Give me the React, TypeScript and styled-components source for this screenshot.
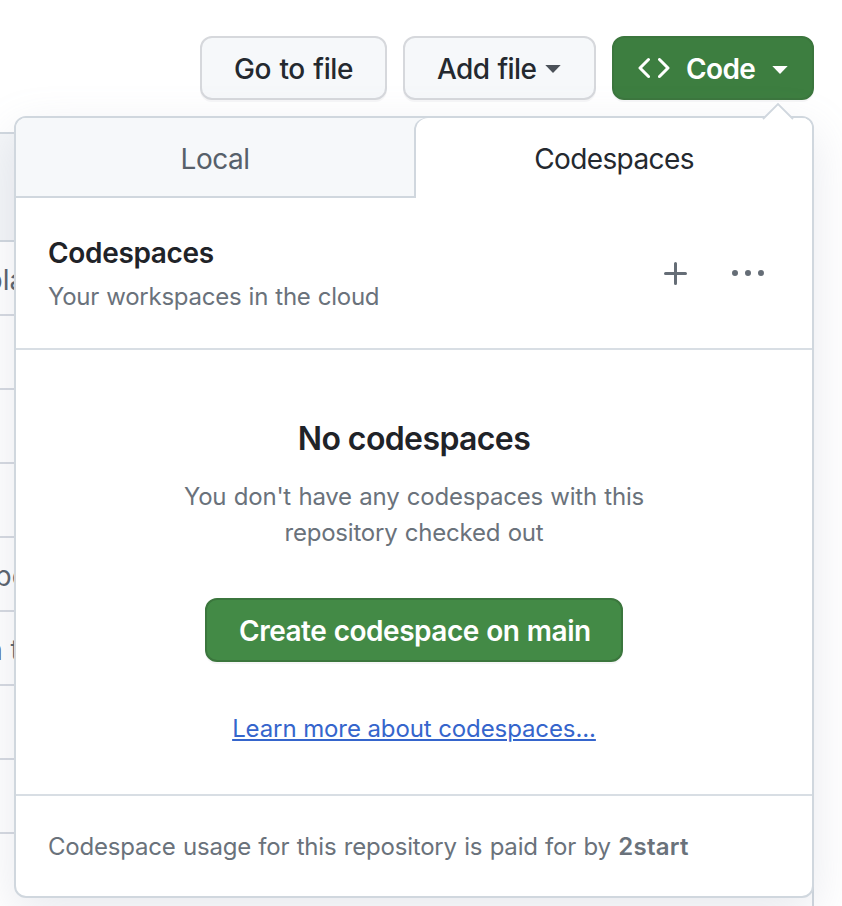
import React from "react";
import styled, { createGlobalStyle } from "styled-components";

const Global = createGlobalStyle`
  * { box-sizing: border-box; }
  body { margin: 0; background: #fff; }
  h2, h3, p { margin: 0; }
  button { font: inherit; }
`;

const Page = styled.main`
  position: relative;
  width: 842px;
  height: 906px;
  overflow: hidden;
  background: #fff;
  color: #1f2328;
  font-family: Inter, "Liberation Sans", sans-serif;
  -webkit-font-smoothing: antialiased;
`;

const Toolbar = styled.header`
  display: flex;
  justify-content: flex-end;
  gap: 16px;
  height: 132px;
  padding: 36px 28px 0 0;
`;

const Button = styled.button<{ $primary?: boolean; $width: number; $background?: string }>`
  display: flex;
  align-items: center;
  width: ${(p) => p.$width}px;
  height: 64px;
  padding: 1px 0 0 32px;
  border: 2px solid ${(p) => (p.$primary ? "#3b763d" : "#d6d8dc")};
  border-radius: 12px;
  background: ${(p) => p.$background ?? "#f6f8fa"};
  color: ${(p) => (p.$primary ? "#fff" : "#24292f")};
  box-shadow: 0 2px 0 rgba(31, 35, 40, 0.04);
  white-space: nowrap;
`;

const ButtonText = styled.span<{ $spacing: number; $word?: number; $weight?: number }>`
  font-size: 28px;
  line-height: 40px;
  font-weight: ${(p) => p.$weight ?? 600};
  letter-spacing: ${(p) => p.$spacing}px;
  word-spacing: ${(p) => p.$word ?? 0}px;
`;

const Caret = styled.svg<{ $gap: number; $drop?: number; $color?: string }>`
  flex: none;
  width: 16px;
  height: 8px;
  margin: ${(p) => p.$drop ?? 0}px 0 0 ${(p) => p.$gap}px;
  fill: ${(p) => p.$color ?? "currentColor"};
`;

const CodeIcon = styled.svg`
  flex: none;
  width: 32px;
  height: 32px;
  margin: -1px 16px 0 -8px;
  fill: currentColor;
`;

const FileTable = styled.section`
  width: 842px;
  padding-right: 28px;
`;

const TableHead = styled.div`
  height: 110px;
  border: solid #d0d7de;
  border-width: 2px 2px 2px 0;
  border-radius: 0 12px 0 0;
  background: #f4f6f8;
`;

const TableRow = styled.div`
  height: 74px;
  overflow: hidden;
  border: solid #d5d9e0;
  border-width: 0 2px 2px 0;
  color: #57606a;
  font-size: 28px;
  line-height: 72px;
`;

const RowText = styled.span<{ $shift: number }>`
  display: block;
  margin-left: ${(p) => p.$shift}px;
  padding-top: 2px;
  white-space: pre;
`;

const ReadmeBox = styled.section`
  width: 814px;
  height: 72px;
  border-right: 2px solid #d0d7de;
`;

const Popover = styled.section`
  position: absolute;
  top: 116px;
  left: 14px;
  display: flex;
  flex-direction: column;
  width: 800px;
  height: 782px;
  border: 2px solid #d0d7de;
  border-radius: 12px;
  background: #fff;
  box-shadow: 0 16px 48px rgba(140, 147, 172, 0.2);
`;

const Pointer = styled.svg`
  position: absolute;
  top: -16px;
  right: 18px;
  width: 32px;
  height: 18px;
`;

const Tabs = styled.nav`
  display: flex;
  flex: none;
  height: 80px;
  border-radius: 10px 10px 0 0;
  background: linear-gradient(90deg, #f6f8fa 60%, #fff 60%);
`;

const Tab = styled.button<{ $active?: boolean }>`
  flex: 0 0 ${(p) => (p.$active ? 396 : 400)}px;
  padding: ${(p) => (p.$active ? "1px 0 0" : "4px 2px 0 0")};
  border: 0 solid #d0d7de;
  border-width: ${(p) => (p.$active ? "0" : "0 0 2px")};
  border-radius: ${(p) => (p.$active ? "12px 10px 0 0" : "10px 0 0 0")};
  background: ${(p) => (p.$active ? "#fff" : "#f6f8fa")};
  box-shadow: ${(p) => (p.$active ? "-2px 0 0 #d0d7de" : "none")};
  color: ${(p) => (p.$active ? "#24292f" : "#57606a")};
  font-size: 28px;
  line-height: 36px;
  letter-spacing: ${(p) => (p.$active ? -0.6 : -0.5)}px;
`;

const Intro = styled.header`
  display: flex;
  align-items: center;
  justify-content: space-between;
  flex: none;
  height: 152px;
  padding: 2px 48px 0 32px;
  border-bottom: 2px solid #d8dee4;
`;

const IntroText = styled.div`
  display: flex;
  flex-direction: column;
  gap: 6px;
`;

const IntroTitle = styled.h3`
  font-size: 28px;
  line-height: 40px;
  font-weight: 600;
  letter-spacing: -0.33px;
`;

const Muted = styled.p<{ $spacing: number; $word: number }>`
  color: #6a727b;
  font-size: 24px;
  line-height: 36px;
  letter-spacing: ${(p) => p.$spacing}px;
  word-spacing: ${(p) => p.$word}px;
  white-space: nowrap;
`;

const Actions = styled.div`
  display: flex;
  gap: 40px;
  color: #656d76;
`;

const ActionIcon = styled.svg`
  display: block;
  width: 32px;
  height: 32px;
  fill: currentColor;
`;

const Blank = styled.div`
  display: flex;
  flex-direction: column;
  align-items: center;
  flex: none;
  height: 446px;
  padding-top: 65px;
  border-bottom: 2px solid #d8dee4;
  text-align: center;
`;

const BlankTitle = styled.h2`
  margin-bottom: 16px;
  font-size: 32px;
  line-height: 48px;
  font-weight: 600;
  letter-spacing: -0.61px;
`;

const CreateSlot = styled.div`
  margin: 47px 0 49px;
`;

const Link = styled.a`
  color: #3565cc;
  font-size: 24px;
  line-height: 36px;
  text-decoration: underline;
  text-decoration-thickness: 2px;
  text-underline-offset: 2px;
  text-decoration-skip-ink: auto;
  letter-spacing: -0.1px;
`;

const Footer = styled.footer`
  display: flex;
  align-items: center;
  flex: 1;
  padding: 2px 0 0 32px;
`;

const Payer = styled.strong`
  font-weight: 600;
  letter-spacing: 0.3px;
`;

const rows = [
  { text: "pla", shift: -14.5 },
  { text: "", shift: 0 },
  { text: "", shift: 0 },
  { text: "", shift: 0 },
  { text: "pe", shift: -5.5 },
  { text: "n t", shift: -13.8 },
  { text: "", shift: 0 },
  { text: "", shift: 0 },
];

function DropCaret({ gap, drop, color }: { gap: number; drop?: number; color?: string }) {
  return (
    <Caret $gap={gap} $drop={drop} $color={color} viewBox="0 0 16 8" aria-hidden="true">
      <path d="M0.3 0H15.7L8 8Z" />
    </Caret>
  );
}

export default function App() {
  return (
    <Page>
      <Global />
      <Toolbar>
        <Button $width={187}>
          <ButtonText $spacing={-0.43} $word={1.5} $weight={550}>Go to file</ButtonText>
        </Button>
        <Button $width={193}>
          <ButtonText $spacing={-0.6} $word={1.2} $weight={550}>Add file</ButtonText>
          <DropCaret gap={9} color="#4b5158" />
        </Button>
        <Button $primary $width={202} $background="#3d7e40">
          <CodeIcon viewBox="0 0 16 16" aria-hidden="true">
            <path d="m11.28 3.22 4.25 4.25a.75.75 0 0 1 0 1.06l-4.25 4.25a.749.749 0 0 1-1.275-.326.749.749 0 0 1 .215-.734L13.94 8l-3.72-3.72a.749.749 0 0 1 .326-1.275.749.749 0 0 1 .734.215Zm-6.56 0a.751.751 0 0 1 1.042.018.751.751 0 0 1 .018 1.042L2.06 8l3.72 3.72a.749.749 0 0 1-.326 1.275.749.749 0 0 1-.734-.215L.47 8.53a.75.75 0 0 1 0-1.06Z" />
          </CodeIcon>
          <ButtonText $spacing={-0.6}>Code</ButtonText>
          <DropCaret gap={17} drop={2} />
        </Button>
      </Toolbar>

      <FileTable>
        <TableHead />
        {rows.map((row, index) => (
          <TableRow key={index}>
            <RowText $shift={row.shift}>{row.text}</RowText>
          </TableRow>
        ))}
      </FileTable>
      <ReadmeBox />

      <Popover>
        <Pointer viewBox="0 0 32 18" aria-hidden="true">
          <path d="M1 18V17L2 16L16 2L30 16L31 17V18Z" fill="#fff" />
          <path d="M1 17L16 2L31 17" fill="none" stroke="#d0d7de" strokeWidth="1.8" />
        </Pointer>
        <Tabs>
          <Tab>Local</Tab>
          <Tab $active>Codespaces</Tab>
        </Tabs>
        <Intro>
          <IntroText>
            <IntroTitle>Codespaces</IntroTitle>
            <Muted $spacing={-0.25} $word={0.7}>Your workspaces in the cloud</Muted>
          </IntroText>
          <Actions>
            <ActionIcon viewBox="0 0 16 16" aria-label="Create">
              <path d="M7.75 2a.75.75 0 0 1 .75.75V7h4.25a.75.75 0 0 1 0 1.5H8.5v4.25a.75.75 0 0 1-1.5 0V8.5H2.75a.75.75 0 0 1 0-1.5H7V2.75A.75.75 0 0 1 7.75 2Z" />
            </ActionIcon>
            <ActionIcon viewBox="0 0 16 16" aria-label="More">
              <path d="M8 9a1.5 1.5 0 1 0 0-3 1.5 1.5 0 0 0 0 3ZM1.5 9a1.5 1.5 0 1 0 0-3 1.5 1.5 0 0 0 0 3Zm13 0a1.5 1.5 0 1 0 0-3 1.5 1.5 0 0 0 0 3Z" />
            </ActionIcon>
          </Actions>
        </Intro>
        <Blank>
          <BlankTitle>No codespaces</BlankTitle>
          <Muted $spacing={-0.22} $word={0.9}>
            You don't have any codespaces with this
            <br />
            repository checked out
          </Muted>
          <CreateSlot>
            <Button $primary $width={418} $background="#438a46">
              <ButtonText $spacing={-0.48} $word={0.8}>Create codespace on main</ButtonText>
            </Button>
          </CreateSlot>
          <Link>Learn more about codespaces...</Link>
        </Blank>
        <Footer>
          <Muted $spacing={-0.2} $word={0.8}>
            Codespace usage for this repository is paid for by <Payer>2start</Payer>
          </Muted>
        </Footer>
      </Popover>
    </Page>
  );
}
